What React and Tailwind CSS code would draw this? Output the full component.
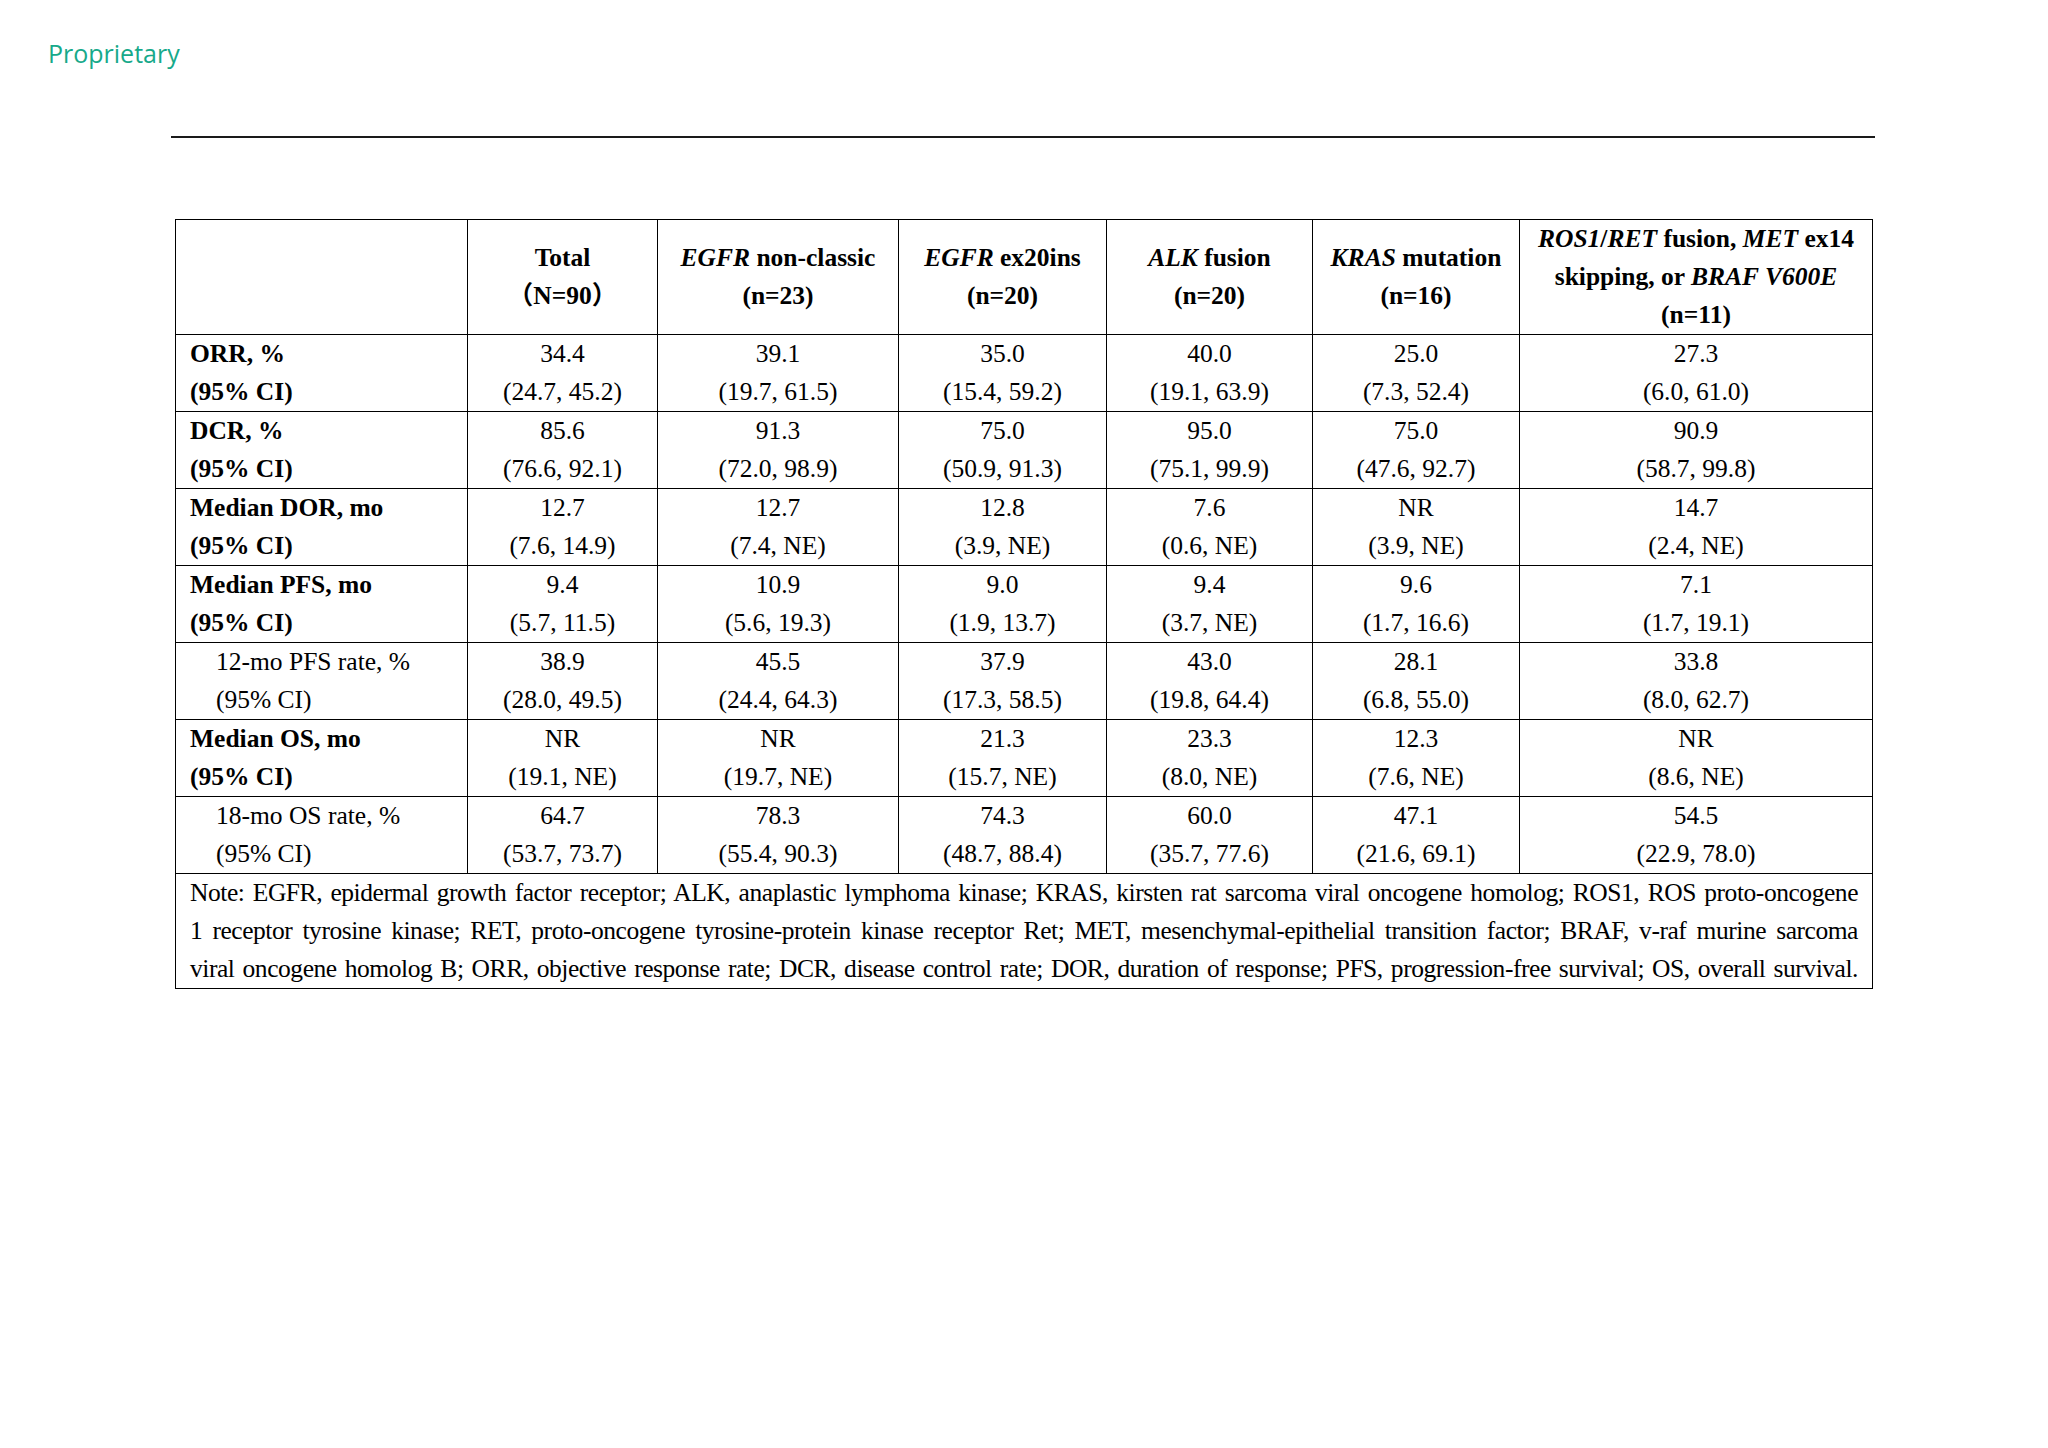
import React from "react";

const cols = ["w-[292px]", "w-[190px]", "w-[241px]", "w-[208px]", "w-[206px]", "w-[207px]", "w-[353px]"];

const rows = [
  {
    label: "ORR, %",
    bold: true,
    vals: [
      ["34.4", "(24.7, 45.2)"],
      ["39.1", "(19.7, 61.5)"],
      ["35.0", "(15.4, 59.2)"],
      ["40.0", "(19.1, 63.9)"],
      ["25.0", "(7.3, 52.4)"],
      ["27.3", "(6.0, 61.0)"],
    ],
  },
  {
    label: "DCR, %",
    bold: true,
    vals: [
      ["85.6", "(76.6, 92.1)"],
      ["91.3", "(72.0, 98.9)"],
      ["75.0", "(50.9, 91.3)"],
      ["95.0", "(75.1, 99.9)"],
      ["75.0", "(47.6, 92.7)"],
      ["90.9", "(58.7, 99.8)"],
    ],
  },
  {
    label: "Median DOR, mo",
    bold: true,
    vals: [
      ["12.7", "(7.6, 14.9)"],
      ["12.7", "(7.4, NE)"],
      ["12.8", "(3.9, NE)"],
      ["7.6", "(0.6, NE)"],
      ["NR", "(3.9, NE)"],
      ["14.7", "(2.4, NE)"],
    ],
  },
  {
    label: "Median PFS, mo",
    bold: true,
    vals: [
      ["9.4", "(5.7, 11.5)"],
      ["10.9", "(5.6, 19.3)"],
      ["9.0", "(1.9, 13.7)"],
      ["9.4", "(3.7, NE)"],
      ["9.6", "(1.7, 16.6)"],
      ["7.1", "(1.7, 19.1)"],
    ],
  },
  {
    label: "12-mo PFS rate, %",
    bold: false,
    vals: [
      ["38.9", "(28.0, 49.5)"],
      ["45.5", "(24.4, 64.3)"],
      ["37.9", "(17.3, 58.5)"],
      ["43.0", "(19.8, 64.4)"],
      ["28.1", "(6.8, 55.0)"],
      ["33.8", "(8.0, 62.7)"],
    ],
  },
  {
    label: "Median OS, mo",
    bold: true,
    vals: [
      ["NR", "(19.1, NE)"],
      ["NR", "(19.7, NE)"],
      ["21.3", "(15.7, NE)"],
      ["23.3", "(8.0, NE)"],
      ["12.3", "(7.6, NE)"],
      ["NR", "(8.6, NE)"],
    ],
  },
  {
    label: "18-mo OS rate, %",
    bold: false,
    vals: [
      ["64.7", "(53.7, 73.7)"],
      ["78.3", "(55.4, 90.3)"],
      ["74.3", "(48.7, 88.4)"],
      ["60.0", "(35.7, 77.6)"],
      ["47.1", "(21.6, 69.1)"],
      ["54.5", "(22.9, 78.0)"],
    ],
  },
];

const noteLines = [
  "Note: EGFR, epidermal growth factor receptor; ALK, anaplastic lymphoma kinase; KRAS, kirsten rat sarcoma viral oncogene homolog; ROS1, ROS proto-oncogene",
  "1 receptor tyrosine kinase; RET, proto-oncogene tyrosine-protein kinase receptor Ret; MET, mesenchymal-epithelial transition factor; BRAF, v-raf murine sarcoma",
  "viral oncogene homolog B; ORR, objective response rate; DCR, disease control rate; DOR, duration of response; PFS, progression-free survival; OS, overall survival.",
];

const cell = "border border-black p-0 align-middle";

export default function App() {
  return (
    <div className="w-[2048px] h-[1448px] bg-white overflow-hidden">
      {/* Header mark */}
      <div className="pt-[36px] pl-[48px] font-['Open_Sans',sans-serif] text-[25px] leading-[34px] text-[#17a98a]">
        Proprietary
      </div>
      <div className="mt-[66px] ml-[171px] w-[1704px] h-[2px] bg-[#1a1a1a]" />

      {/* Table */}
      <table className="mt-[81px] ml-[175px] w-[1697px] table-fixed border-collapse font-['Liberation_Serif','Times_New_Roman',serif] text-[25.5px] leading-[38px] text-black">
        <colgroup>
          {cols.map((c, i) => (
            <col key={i} className={c} />
          ))}
        </colgroup>
        <thead>
          <tr className="font-bold text-center">
            <th className={cell}></th>
            <th className={cell + " font-bold"}>
              Total
              <br />
              <span className="font-['Liberation_Serif','Noto_Sans_CJK_SC',serif]">（N=90）</span>
            </th>
            <th className={cell + " font-bold"}>
              <i>EGFR</i> non-classic
              <br />
              (n=23)
            </th>
            <th className={cell + " font-bold"}>
              <i>EGFR</i> ex20ins
              <br />
              (n=20)
            </th>
            <th className={cell + " font-bold"}>
              <i>ALK</i> fusion
              <br />
              (n=20)
            </th>
            <th className={cell + " font-bold"}>
              <i>KRAS</i> mutation
              <br />
              (n=16)
            </th>
            <th className={cell + " font-bold"}>
              <i>ROS1</i>/<i>RET</i> fusion, <i>MET</i> ex14
              <br />
              skipping, or <i>BRAF V600E</i>
              <br />
              (n=11)
            </th>
          </tr>
        </thead>
        <tbody>
          {rows.map((r) => (
            <tr key={r.label}>
              <td className={cell + (r.bold ? " font-bold pl-[14px]" : " pl-[40px]")}>
                {r.label}
                <br />
                (95% CI)
              </td>
              {r.vals.map((v, i) => (
                <td key={i} className={cell + " text-center"}>
                  {v[0]}
                  <br />
                  {v[1]}
                </td>
              ))}
            </tr>
          ))}
          <tr>
            <td colSpan={7} className={cell + " px-[14px]"}>
              {noteLines.map((l, i) => (
                <div
                  key={i}
                  className="text-justify [text-align-last:justify] tracking-[-0.45px] [word-spacing:-2px] [hyphens:none]"
                >
                  {l}
                </div>
              ))}
            </td>
          </tr>
        </tbody>
      </table>
    </div>
  );
}
